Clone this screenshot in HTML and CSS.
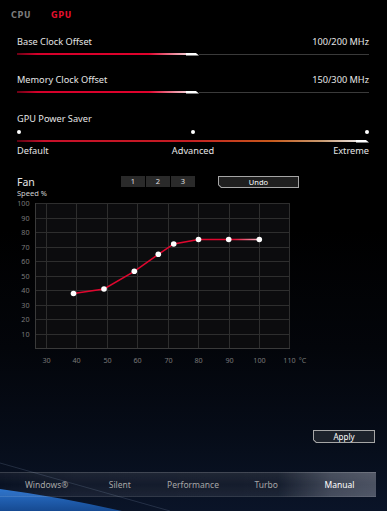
FILE: index.html
```html
<!DOCTYPE html>
<html>
<head>
  <meta charset="utf-8">
  <title>GPU tuning</title>
  <link rel="stylesheet" href="styles.css">
</head>
<body>
  <svg class="decor" width="387" height="60" viewBox="0 451 387 60">
    <defs>
      <linearGradient id="swoosh" x1="0" y1="0" x2="0" y2="1">
        <stop offset="0" stop-color="#2a72cc"/>
        <stop offset="1" stop-color="#164a92"/>
      </linearGradient>
    </defs>
    <path d="M0 463 L170 511" stroke="rgba(130,150,180,.22)" stroke-width="1" fill="none"/>
    <path d="M0 489 Q60 497 122 511 L0 511 Z" fill="url(#swoosh)"/>
  </svg>

  <div class="tabs">
    <span class="tab">CPU</span>
    <span class="tab active">GPU</span>
  </div>

  <div class="settings">
    <div class="row first">
      <span>Base Clock Offset</span>
      <span>100/200 MHz</span>
    </div>
    <div class="slider">
      <div class="fill" style="width:169px"></div>
      <div class="thumb"></div>
      <div class="rest"></div>
    </div>

    <div class="row spaced">
      <span>Memory Clock Offset</span>
      <span>150/300 MHz</span>
    </div>
    <div class="slider">
      <div class="fill" style="width:169px"></div>
      <div class="thumb"></div>
      <div class="rest"></div>
    </div>

    <div class="row spaced wide">
      <span>GPU Power Saver</span>
    </div>
    <div class="dots">
      <span class="dot"></span>
      <span class="dot"></span>
      <span class="dot"></span>
    </div>
    <div class="slider power">
      <div class="fill"></div>
      <div class="thumb"></div>
    </div>
    <div class="scale">
      <span>Default</span>
      <span>Advanced</span>
      <span class="end">Extreme</span>
    </div>
  </div>

  <div class="fan-head">
    <div class="fan-title">
      <div class="name">Fan</div>
      <div class="unit">Speed %</div>
    </div>
    <div class="presets">
      <span class="preset">1</span>
      <span class="preset">2</span>
      <span class="preset">3</span>
    </div>
    <div class="btn undo"><span>Undo</span></div>
  </div>

  <svg class="chart" width="310" height="170" viewBox="0 198 310 170">
    <defs>
      <linearGradient id="curve" gradientUnits="userSpaceOnUse" x1="70" y1="0" x2="262" y2="0">
        <stop offset="0" stop-color="#e0062e"/>
        <stop offset="0.85" stop-color="#e0062e"/>
        <stop offset="1" stop-color="#f7c6d0"/>
      </linearGradient>
    </defs>
    <rect x="35" y="203" width="255" height="145.5" fill="#0c0c0e"/>
    <g stroke="#2e2e2e" stroke-width="1">
      <line x1="35" y1="203.5" x2="290" y2="203.5"/>
      <line x1="35" y1="218.5" x2="290" y2="218.5"/>
      <line x1="35" y1="232.5" x2="290" y2="232.5"/>
      <line x1="35" y1="247.5" x2="290" y2="247.5"/>
      <line x1="35" y1="261.5" x2="290" y2="261.5"/>
      <line x1="35" y1="276.5" x2="290" y2="276.5"/>
      <line x1="35" y1="290.5" x2="290" y2="290.5"/>
      <line x1="35" y1="305.5" x2="290" y2="305.5"/>
      <line x1="35" y1="319.5" x2="290" y2="319.5"/>
      <line x1="35" y1="334.5" x2="290" y2="334.5"/>
      <line x1="46.5" y1="203" x2="46.5" y2="348"/>
      <line x1="76.5" y1="203" x2="76.5" y2="348"/>
      <line x1="107.5" y1="203" x2="107.5" y2="348"/>
      <line x1="137.5" y1="203" x2="137.5" y2="348"/>
      <line x1="168.5" y1="203" x2="168.5" y2="348"/>
      <line x1="198.5" y1="203" x2="198.5" y2="348"/>
      <line x1="229.5" y1="203" x2="229.5" y2="348"/>
      <line x1="259.5" y1="203" x2="259.5" y2="348"/>
      <line x1="289.5" y1="203" x2="289.5" y2="348"/>
    </g>
    <g stroke="#3a3a3a" stroke-width="1">
      <line x1="35.5" y1="203" x2="35.5" y2="349"/>
      <line x1="35" y1="348.5" x2="290" y2="348.5"/>
    </g>
    <g class="axis" text-anchor="end">
      <text x="29.5" y="206">100</text>
      <text x="29.5" y="221">90</text>
      <text x="29.5" y="235">80</text>
      <text x="29.5" y="250">70</text>
      <text x="29.5" y="264">60</text>
      <text x="29.5" y="279">50</text>
      <text x="29.5" y="293">40</text>
      <text x="29.5" y="308">30</text>
      <text x="29.5" y="322">20</text>
      <text x="29.5" y="337">10</text>
    </g>
    <g class="axis" text-anchor="middle">
      <text x="46.5" y="363">30</text>
      <text x="76.5" y="363">40</text>
      <text x="107.5" y="363">50</text>
      <text x="137.5" y="363">60</text>
      <text x="168.5" y="363">70</text>
      <text x="198.5" y="363">80</text>
      <text x="229.5" y="363">90</text>
      <text x="259.5" y="363">100</text>
      <text x="289.5" y="363">110</text>
      <text x="302.5" y="363">°C</text>
    </g>
    <polyline points="73.5,293.5 104,289 134.3,271.3 158.3,254.3 173.7,244 198.5,239.5 228.7,239.5 259.3,239.5"
      fill="none" stroke="url(#curve)" stroke-width="1.5"/>
    <g fill="#fff">
      <circle cx="73.5" cy="293.5" r="2.8"/>
      <circle cx="104" cy="289" r="2.8"/>
      <circle cx="134.3" cy="271.3" r="2.8"/>
      <circle cx="158.3" cy="254.3" r="2.8"/>
      <circle cx="173.7" cy="244" r="2.8"/>
      <circle cx="198.5" cy="239.5" r="2.8"/>
      <circle cx="228.7" cy="239.5" r="2.8"/>
      <circle cx="259.3" cy="239.5" r="2.8"/>
    </g>
  </svg>

  <div class="actions">
    <div class="btn apply"><span>Apply</span></div>
  </div>

  <div class="modes">
    <span class="mode">Windows®</span>
    <span class="mode">Silent</span>
    <span class="mode">Performance</span>
    <span class="mode">Turbo</span>
    <span class="mode active">Manual</span>
  </div>
</body>
</html>
```

FILE: styles.css
```css
* {
  box-sizing: border-box;
}
html {
  height: 100%;
  background: linear-gradient(#000 0%, #000 45%, #03050a 68%, #060c18 85%, #0a1428 100%);
}
body {
  margin: 0;
  height: 511px;
  overflow: hidden;
  font-family: "Noto Sans", "Open Sans", sans-serif;
  color: #e6e6e6;
}
.decor {
  position: absolute;
  left: 0;
  bottom: 0;
  z-index: -1;
}

/* cpu / gpu switch */
.tabs {
  display: flex;
  gap: 20px;
  padding: 11px 0 0 11px;
  font-family: "DejaVu Sans", sans-serif;
  font-weight: bold;
  font-size: 8px;
  line-height: 10px;
  letter-spacing: 0.6px;
}
.tab {
  color: #7c7c7c;
}
.tab.active {
  color: #e3102e;
}

/* sliders */
.settings {
  padding: 0 18px 0 17px;
}
.row {
  display: flex;
  justify-content: space-between;
  font-size: 9.2px;
  line-height: 12px;
}
.row.first {
  margin-top: 15px;
}
.row.spaced {
  margin-top: 18px;
}
.row.wide {
  margin-top: 19px;
}
.slider {
  display: flex;
  align-items: center;
  height: 4px;
  margin-top: 4px;
}
.fill {
  height: 2px;
  background: linear-gradient(to right, #6a0014, #d4002a 12%, #e0022c 78%, #f4c6ce 100%);
}
.thumb {
  flex: none;
  width: 13px;
  height: 3px;
  background: #fff;
  clip-path: polygon(0 0, 72% 0, 100% 100%, 0 100%);
}
.rest {
  flex: 1;
  height: 1px;
  background: #3a3a3a;
}
.dots {
  display: flex;
  justify-content: space-between;
  margin-top: 5px;
}
.dot {
  width: 4px;
  height: 4px;
  border-radius: 50%;
  background: #fff;
}
.slider.power {
  margin-top: 5px;
}
.slider.power .fill {
  flex: 1;
  background: linear-gradient(to right, #5a0010, #c8102a 8%, #c41c22 50%, #c85a1c 75%, #c89a70 90%, #e8e0dc 100%);
}
.scale {
  display: grid;
  grid-template-columns: 1fr auto 1fr;
  margin-top: 2px;
  font-size: 9.2px;
  line-height: 12px;
}
.scale .end {
  justify-self: end;
}

/* fan header */
.fan-head {
  display: flex;
  align-items: flex-start;
  margin-top: 18px;
  padding-left: 17px;
}
.fan-title {
  width: 104px;
}
.fan-title .name {
  font-size: 10.5px;
  line-height: 14px;
}
.fan-title .unit {
  font-size: 7.5px;
  line-height: 9px;
  color: #cfcfcf;
}
.presets {
  display: flex;
  gap: 1px;
  height: 11px;
  margin-top: 1px;
}
.preset {
  width: 24px;
  background: #2a2a2a;
  font-size: 7.5px;
  line-height: 11px;
  text-align: center;
  color: #e0e0e0;
}
.btn {
  padding: 1px;
  background: #a6a6a6;
  clip-path: polygon(3px 100%, 0 calc(100% - 3px), 0 0, 100% 0, 100% 100%);
}
.btn span {
  display: block;
  height: 100%;
  text-align: center;
  color: #fff;
  clip-path: polygon(2.5px 100%, 0 calc(100% - 2.5px), 0 0, 100% 0, 100% 100%);
}
.undo {
  margin-left: 23px;
  margin-top: 1px;
  width: 81px;
  height: 12px;
}
.undo span {
  background: #1f1f1f;
  font-size: 7.5px;
  line-height: 10px;
}

/* chart */
.chart {
  display: block;
}
.axis text {
  font-family: "Noto Sans", sans-serif;
  font-size: 7.2px;
  fill: #7a7a7a;
}

/* apply */
.actions {
  display: flex;
  justify-content: flex-end;
  padding-right: 12px;
  margin-top: 62px;
}
.apply {
  width: 62px;
  height: 13px;
}
.apply span {
  background: #1d222b;
  font-size: 8px;
  line-height: 11px;
}

/* mode bar */
.modes {
  display: flex;
  width: 376px;
  height: 25px;
  margin-top: 29px;
  padding-left: 10px;
  border-top: 1px solid rgba(255, 255, 255, .17);
  border-bottom: 1px solid rgba(255, 255, 255, .08);
  background:
    linear-gradient(rgba(255, 255, 255, .05), rgba(255, 255, 255, 0) 50%, rgba(255, 255, 255, .03)),
    linear-gradient(to right, rgba(255, 255, 255, 0) 0, rgba(255, 255, 255, .04) 20%, rgba(255, 255, 255, .05) 74%, rgba(130, 135, 150, .45) 88%, rgba(130, 135, 150, .55) 100%);
}
.mode {
  flex: 1;
  text-align: center;
  font-size: 8.5px;
  line-height: 23px;
  color: #a6a6a6;
}
.mode.active {
  color: #fff;
}
```
